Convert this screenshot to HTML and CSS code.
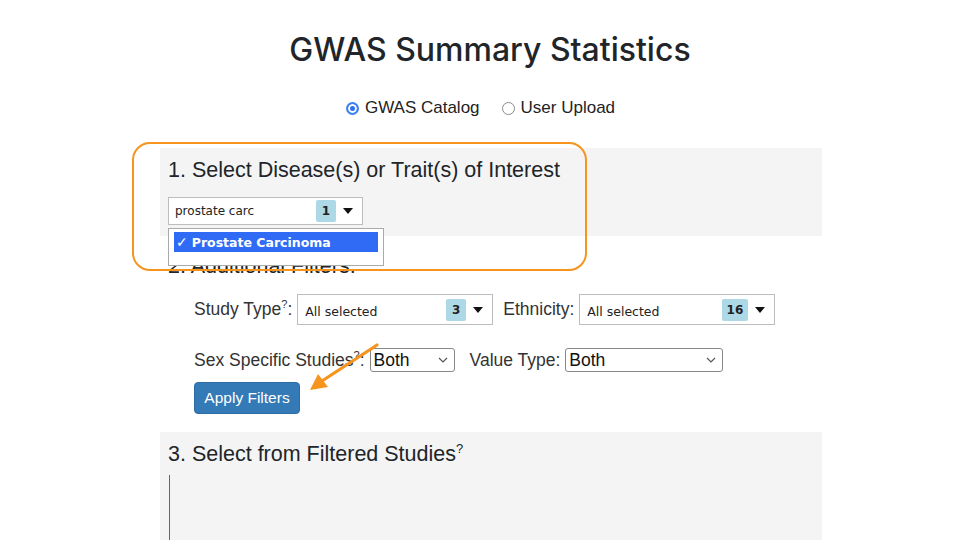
FILE: index.html
```html
<!DOCTYPE html>
<html>
<head>
<meta charset="utf-8">
<link rel="stylesheet" href="styles.css">
</head>
<body>
<div class="page">
  <h1 class="title">GWAS Summary Statistics</h1>
  <div class="source">
    <label class="radio"><span class="dot on"></span>GWAS Catalog</label>
    <label class="radio"><span class="dot"></span>User Upload</label>
  </div>
  <div class="main">
    <section class="panel p1">
      <h2 class="head">1. Select Disease(s) or Trait(s) of Interest</h2>
      <div class="ms ms-disease">
        <span class="ms-text">prostate carc</span>
        <span class="badge">1</span>
        <span class="caret"></span>
      </div>
    </section>
    <section class="panel p2">
      <h2 class="head">2. Additional Filters:</h2>
      <div class="row">
        <span class="lbl">Study Type<sup>?</sup>:</span>
        <div class="ms ms-wide">
          <span class="ms-text">All selected</span>
          <span class="badge">3</span>
          <span class="caret"></span>
        </div>
        <span class="lbl lbl-gap">Ethnicity:</span>
        <div class="ms ms-wide">
          <span class="ms-text">All selected</span>
          <span class="badge b16">16</span>
          <span class="caret"></span>
        </div>
      </div>
      <div class="row row2">
        <span class="lbl">Sex Specific Studies<sup>?</sup>:</span>
        <div class="sel sel-sex"><span>Both</span><svg width="10" height="6" viewBox="0 0 10 6"><path d="M1 1l4 4 4-4" fill="none" stroke="#555" stroke-width="1.2"/></svg></div>
        <span class="lbl lbl-gap2">Value Type:</span>
        <div class="sel sel-val"><span>Both</span><svg width="10" height="6" viewBox="0 0 10 6"><path d="M1 1l4 4 4-4" fill="none" stroke="#555" stroke-width="1.2"/></svg></div>
      </div>
      <button class="btn">Apply Filters</button>
    </section>
    <section class="panel p3">
      <h2 class="head">3. Select from Filtered Studies<sup>?</sup></h2>
      <div class="list"></div>
    </section>
  </div>

  <div class="dropdown">
    <div class="opt"><span class="chk">✓</span>Prostate Carcinoma</div>
  </div>
  <div class="callout"></div>
  <svg class="arrow" width="90" height="60" viewBox="0 0 90 60">
    <line x1="77" y1="4" x2="22" y2="40" stroke="#f7941d" stroke-width="3.2" stroke-linecap="round"/>
    <polygon points="10,49 18,33 28,46" fill="#f7941d"/>
  </svg>
</div>
</body>
</html>
```
FILE: styles.css
```css
* { box-sizing: border-box; }
html, body { margin: 0; padding: 0; background: #fff; }
body {
  font-family: "Liberation Sans", Arial, sans-serif;
  color: #212529;
  width: 960px;
  height: 540px;
  overflow: hidden;
}
.page { position: relative; width: 960px; height: 540px; overflow: hidden; }
.title {
  margin: 0;
  padding-top: 30px;
  font-family: Inter, "Liberation Sans", sans-serif;
  font-size: 32px;
  line-height: 40px;
  font-weight: 500;
  text-align: center;
  padding-left: 20px;
  color: #212529;
}
.source {
  display: flex;
  justify-content: center;
  gap: 22px;
  margin-top: 28px;
  font-size: 17px;
  line-height: 20px;
  padding-left: 1px;
  color: #222;
}
.radio { display: flex; align-items: center; gap: 6px; }
.dot {
  width: 13px; height: 13px; border-radius: 50%;
  border: 1px solid #8a8a8a; background: #fff; display: inline-block;
}
.dot.on { border: 2px solid #3b82f6; box-shadow: inset 0 0 0 2px #fff; background: #2f6fed; }
.main { margin-left: 160px; width: 662px; margin-top: 30px; }
.panel { padding: 0 8px; }
.p1 { background: #f4f4f4; padding-top: 10px; padding-bottom: 11px; }
.head {
  margin: 0;
  font-size: 21.5px;
  line-height: 24px;
  font-weight: 400;
  color: #212529;
}
.head sup { font-size: 13px; line-height: 0; vertical-align: 8px; }
.ms {
  display: flex;
  align-items: center;
  border: 1px solid #bdbdbd;
  background: #fff;
  font-family: "DejaVu Sans", Verdana, sans-serif;
  font-size: 12px;
  color: #222;
}
.ms-disease { width: 195px; height: 28px; margin-top: 15px; padding-left: 6px; }
.ms-text { flex: 1; }
.badge {
  background: #add8e6;
  font-weight: 700;
  font-size: 12px;
  height: 22px;
  line-height: 22px;
  min-width: 20px;
  text-align: center;
  padding: 0 5px;
  border-radius: 2px;
}
.caret {
  width: 0; height: 0;
  border-left: 5px solid transparent;
  border-right: 5px solid transparent;
  border-top: 6px solid #111;
  margin: 0 9px 0 7px;
}
.p2 { background: #fff; padding-top: 18px; }
.row {
  display: flex;
  align-items: center;
  padding-left: 26px;
  margin-top: 16px;
  font-size: 17.5px;
  color: #333;
}
.lbl sup { font-size: 11px; line-height: 0; vertical-align: 7px; }
.lbl { margin-right: 5px; }
.lbl-gap { margin-left: 10px; }
.lbl-gap2 { margin-left: 15px; }
.ms-wide { width: 196px; height: 31px; padding-left: 7px; font-size: 12.5px; }
.ms-wide .ms-text { padding-top: 4px; }
.row2 { margin-top: 23px; }
.sel {
  display: flex;
  align-items: center;
  justify-content: space-between;
  height: 24px;
  border: 1px solid #888;
  border-radius: 3px;
  background: #fff;
  padding: 0 6px 0 3px;
  font-size: 17.5px;
  color: #111;
}
.sel-sex { width: 85px; }
.sel-val { width: 158px; }
.btn {
  display: block;
  margin: 10px 0 0 26px;
  width: 106px;
  height: 32px;
  border: 1px solid #2e6da4;
  border-radius: 4px;
  background: #337ab7;
  color: #fff;
  font-family: "Liberation Sans", Arial, sans-serif;
  font-size: 15.5px;
  padding: 0;
}
.p3 { background: #f4f4f4; margin-top: 18px; padding-top: 10px; height: 108px; }
.list {
  margin-top: 9px;
  margin-left: 1px;
  height: 65px;
  border-left: 1px solid #666;
}
.dropdown {
  position: absolute;
  left: 168px;
  top: 228px;
  width: 216px;
  height: 38px;
  background: #fff;
  border: 1px solid #aaa;
  padding: 3px 5px;
}
.opt {
  background: #2f6bf5;
  color: #fff;
  font-family: "DejaVu Sans", Verdana, sans-serif;
  font-weight: 700;
  font-size: 12.5px;
  height: 20px;
  line-height: 20px;
  padding-left: 2px;
}
.chk { font-size: 14px; margin-right: 4px; }
.callout {
  position: absolute;
  left: 132px;
  top: 142px;
  width: 455px;
  height: 129px;
  border: 2px solid #f7941d;
  border-radius: 18px;
}
.arrow { position: absolute; left: 300px; top: 341px; }
```
